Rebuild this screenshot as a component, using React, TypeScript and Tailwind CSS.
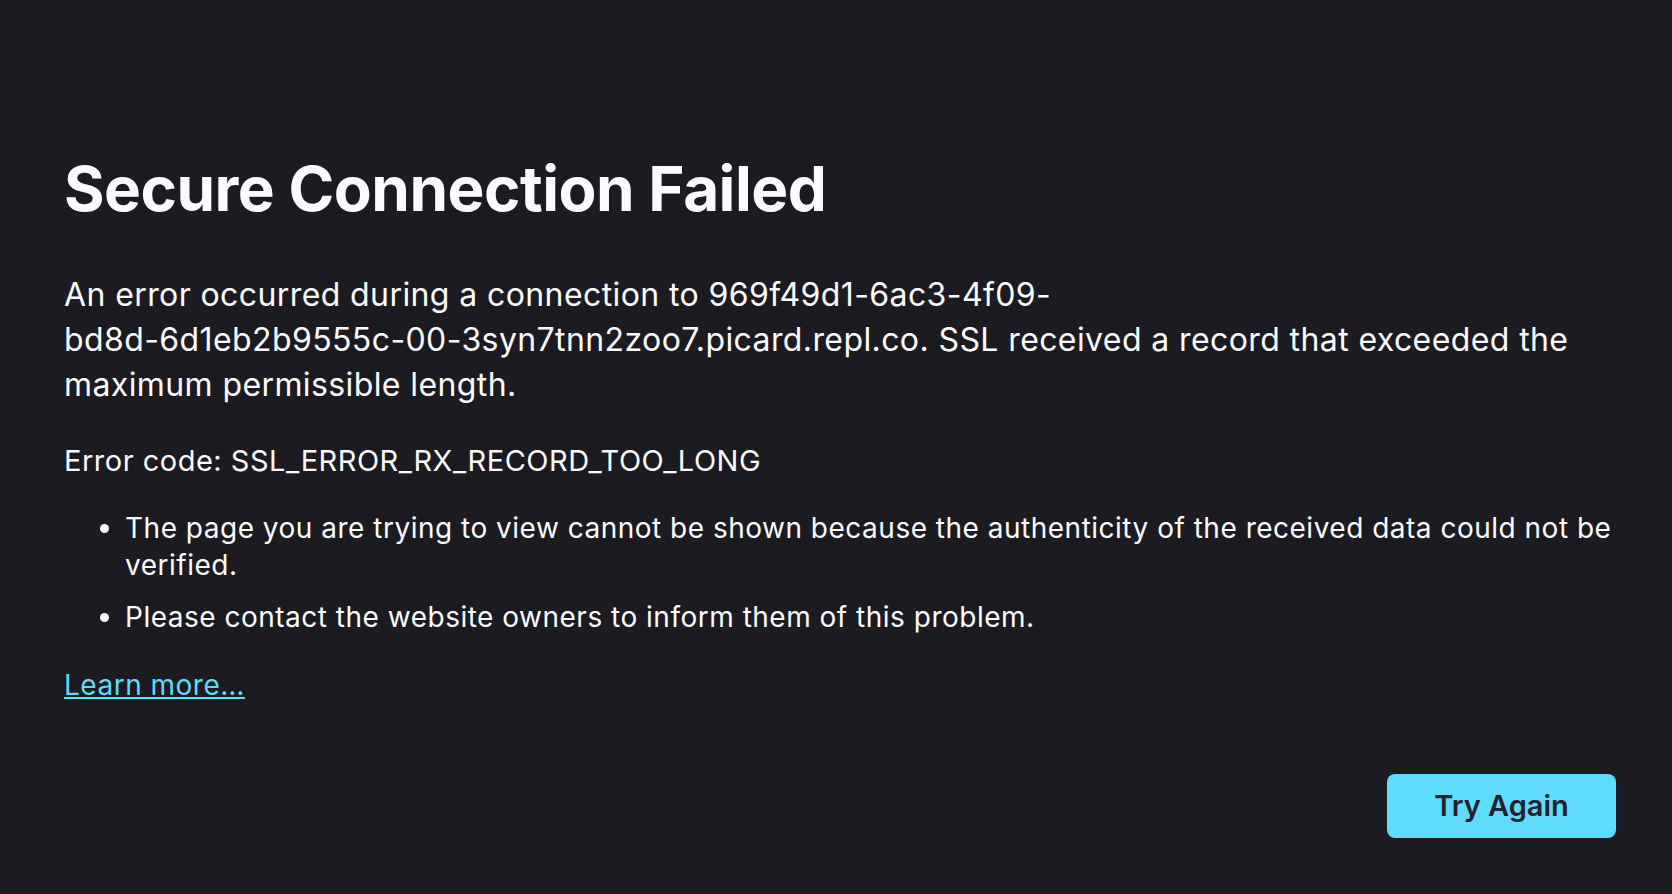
// word joiners keep the host name together except after "4f09-", as the original browser wrapped it
const host = "969f49d1-\u20606ac3-\u20604f09-bd8d-\u20606d1eb2b9555c-\u206000-\u20603syn7tnn2zoo7.picard.repl.co.";

export default function App() {
  return (
    <div className="min-h-screen bg-[#1c1b22] text-[#fbfbfe] font-['Inter',sans-serif]">
      <div className="pl-[64px] pr-[56px] pt-[149px]">
        <h1 className="text-[62px] leading-[80px] font-bold tracking-[-0.5px]">Secure Connection Failed</h1>

        <p className="mt-[43px] text-[32px] leading-[45px] tracking-[0.4px]">
          {`An error occurred during a connection to ${host} SSL received a record that exceeded the maximum permissible length.`}
        </p>

        <p className="mt-[36px] text-[29px] leading-[36px] tracking-[0.5px]">Error code: SSL_ERROR_RX_RECORD_TOO_LONG</p>

        <ul className="mt-[31px] list-disc pl-[61px] text-[28px] leading-[37px] tracking-[0.5px] flex flex-col gap-[15px]">
          <li>The page you are trying to view cannot be shown because the authenticity of the received data could not be verified.</li>
          <li>Please contact the website owners to inform them of this problem.</li>
        </ul>

        <a href="#" className="mt-[31px] block w-fit text-[28px] leading-[37px] tracking-[0.5px] text-[#5cdcfa] underline">
          Learn more…
        </a>

        <div className="mt-[70px] flex justify-end">
          <button className="h-[64px] w-[229px] rounded-[8px] bg-[#5fdbfb] text-[#23222b] text-[29px] font-semibold">
            Try Again
          </button>
        </div>
      </div>
    </div>
  );
}
